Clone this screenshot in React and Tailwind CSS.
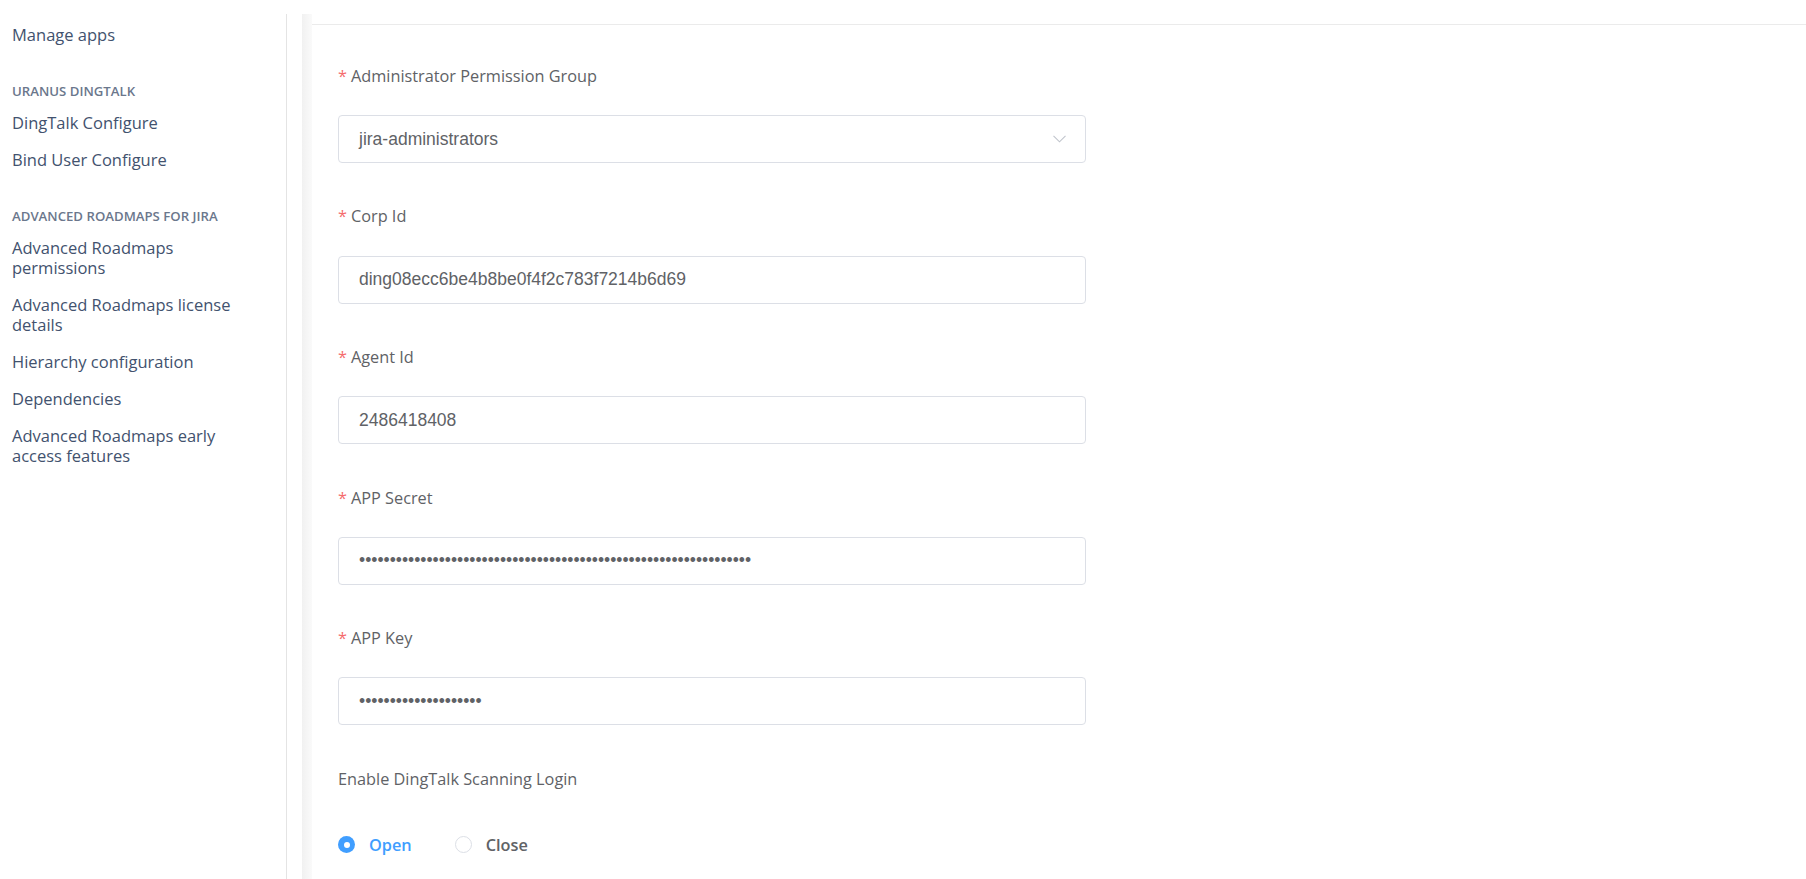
import { useState } from 'react'

const navGroups = [
  { title: null, items: [['Manage apps']] },
  { title: 'Uranus DingTalk', items: [['DingTalk Configure'], ['Bind User Configure']] },
  {
    title: 'Advanced Roadmaps for Jira',
    items: [
      ['Advanced Roadmaps', 'permissions'],
      ['Advanced Roadmaps license', 'details'],
      ['Hierarchy configuration'],
      ['Dependencies'],
      ['Advanced Roadmaps early', 'access features'],
    ],
  },
]

const fields = [
  { label: 'Corp Id', value: 'ding08ecc6be4b8be0f4f2c783f7214b6d69', type: 'text' },
  { label: 'Agent Id', value: '2486418408', type: 'text' },
  { label: 'APP Secret', value: 'a'.repeat(64), type: 'password' },
  { label: 'APP Key', value: 'b'.repeat(20), type: 'password' },
]

const Label = ({ children, required = true }) => (
  <div className="h-[44px] flex items-center font-['Open_Sans',sans-serif] text-[16.3px] text-[#606266]">
    {required && <span className="text-[#f56c6c] mr-[4px]">*</span>}
    {children}
  </div>
)

const Radio = ({ checked, label, onClick }) => (
  <button type="button" onClick={onClick} className="flex items-center cursor-pointer">
    {checked ? (
      <span className="w-[17px] h-[17px] rounded-full bg-[#409eff] flex items-center justify-center">
        <span className="w-[6px] h-[6px] rounded-full bg-white" />
      </span>
    ) : (
      <span className="w-[17px] h-[17px] rounded-full border border-[#dcdfe6] bg-white" />
    )}
    <span
      className={`ml-[14px] font-['Open_Sans',sans-serif] font-semibold text-[16.3px] ${
        checked ? 'text-[#409eff]' : 'text-[#606266]'
      }`}
    >
      {label}
    </span>
  </button>
)

export default function App() {
  const [scan, setScan] = useState('open')

  return (
    <div className="flex h-screen overflow-hidden bg-white">
      {/* Sidebar */}
      <nav className="w-[287px] shrink-0 pt-[14px]">
        <div className="h-full border-r border-[#e4e4e4] pt-[2.5px] pl-[12px] font-['Open_Sans',sans-serif]">
          {navGroups.map((group, gi) => (
            <div key={gi}>
              {group.title && (
                <div className="mt-[29px] mb-[6px] leading-[16px] text-[13.2px] font-semibold uppercase text-[#6b778c]">
                  {group.title}
                </div>
              )}
              {group.items.map((lines, i) => (
                <a key={i} href="#" className="block py-[8.5px] leading-[20px] text-[16.5px] text-[#42526e] whitespace-nowrap">
                  {lines.map((line, li) => (
                    <div key={li}>{line}</div>
                  ))}
                </a>
              ))}
            </div>
          ))}
        </div>
      </nav>

      {/* Content panel */}
      <div className="flex-1 pt-[14px] pl-[15px]">
        <div className="flex h-full">
          <div className="w-[10px] shrink-0 bg-gradient-to-r from-[#f1f1f1] to-[#fafafa]" />
          <div className="flex-1">
            <div className="h-[11px] border-b border-[#ebebeb]" />
            <form className="pl-[26px] pt-[29px]">
              <div className="mb-[31.6px]">
                <Label>Administrator Permission Group</Label>
                <div className="mt-[17px] w-[748px] h-[48px] rounded-[4px] border border-[#dcdfe6] pl-[20px] pr-[16px] flex items-center justify-between">
                  <span className="font-['Liberation_Sans',Arial,sans-serif] text-[17.5px] text-[#606266]">jira-administrators</span>
                  <svg width="13" height="8" viewBox="0 0 13 8" fill="none" stroke="#c0c4cc" strokeWidth="1.1" className="mr-[3px]">
                    <polyline points="0.5,0.8 6.5,6.8 12.5,0.8" />
                  </svg>
                </div>
              </div>

              {fields.map((f) => (
                <div key={f.label} className="mb-[31.6px]">
                  <Label>{f.label}</Label>
                  <input
                    type={f.type}
                    defaultValue={f.value}
                    readOnly
                    className="mt-[17px] block w-[748px] h-[48px] rounded-[4px] border border-[#dcdfe6] px-[20px] outline-none font-['Liberation_Sans',Arial,sans-serif] text-[17.5px] text-[#606266]"
                  />
                </div>
              ))}

              <Label required={false}>Enable DingTalk Scanning Login</Label>
              <div className="mt-[20px] h-[48px] flex items-center gap-[43px]">
                <Radio checked={scan === 'open'} label="Open" onClick={() => setScan('open')} />
                <Radio checked={scan === 'close'} label="Close" onClick={() => setScan('close')} />
              </div>
            </form>
          </div>
        </div>
      </div>
    </div>
  )
}
